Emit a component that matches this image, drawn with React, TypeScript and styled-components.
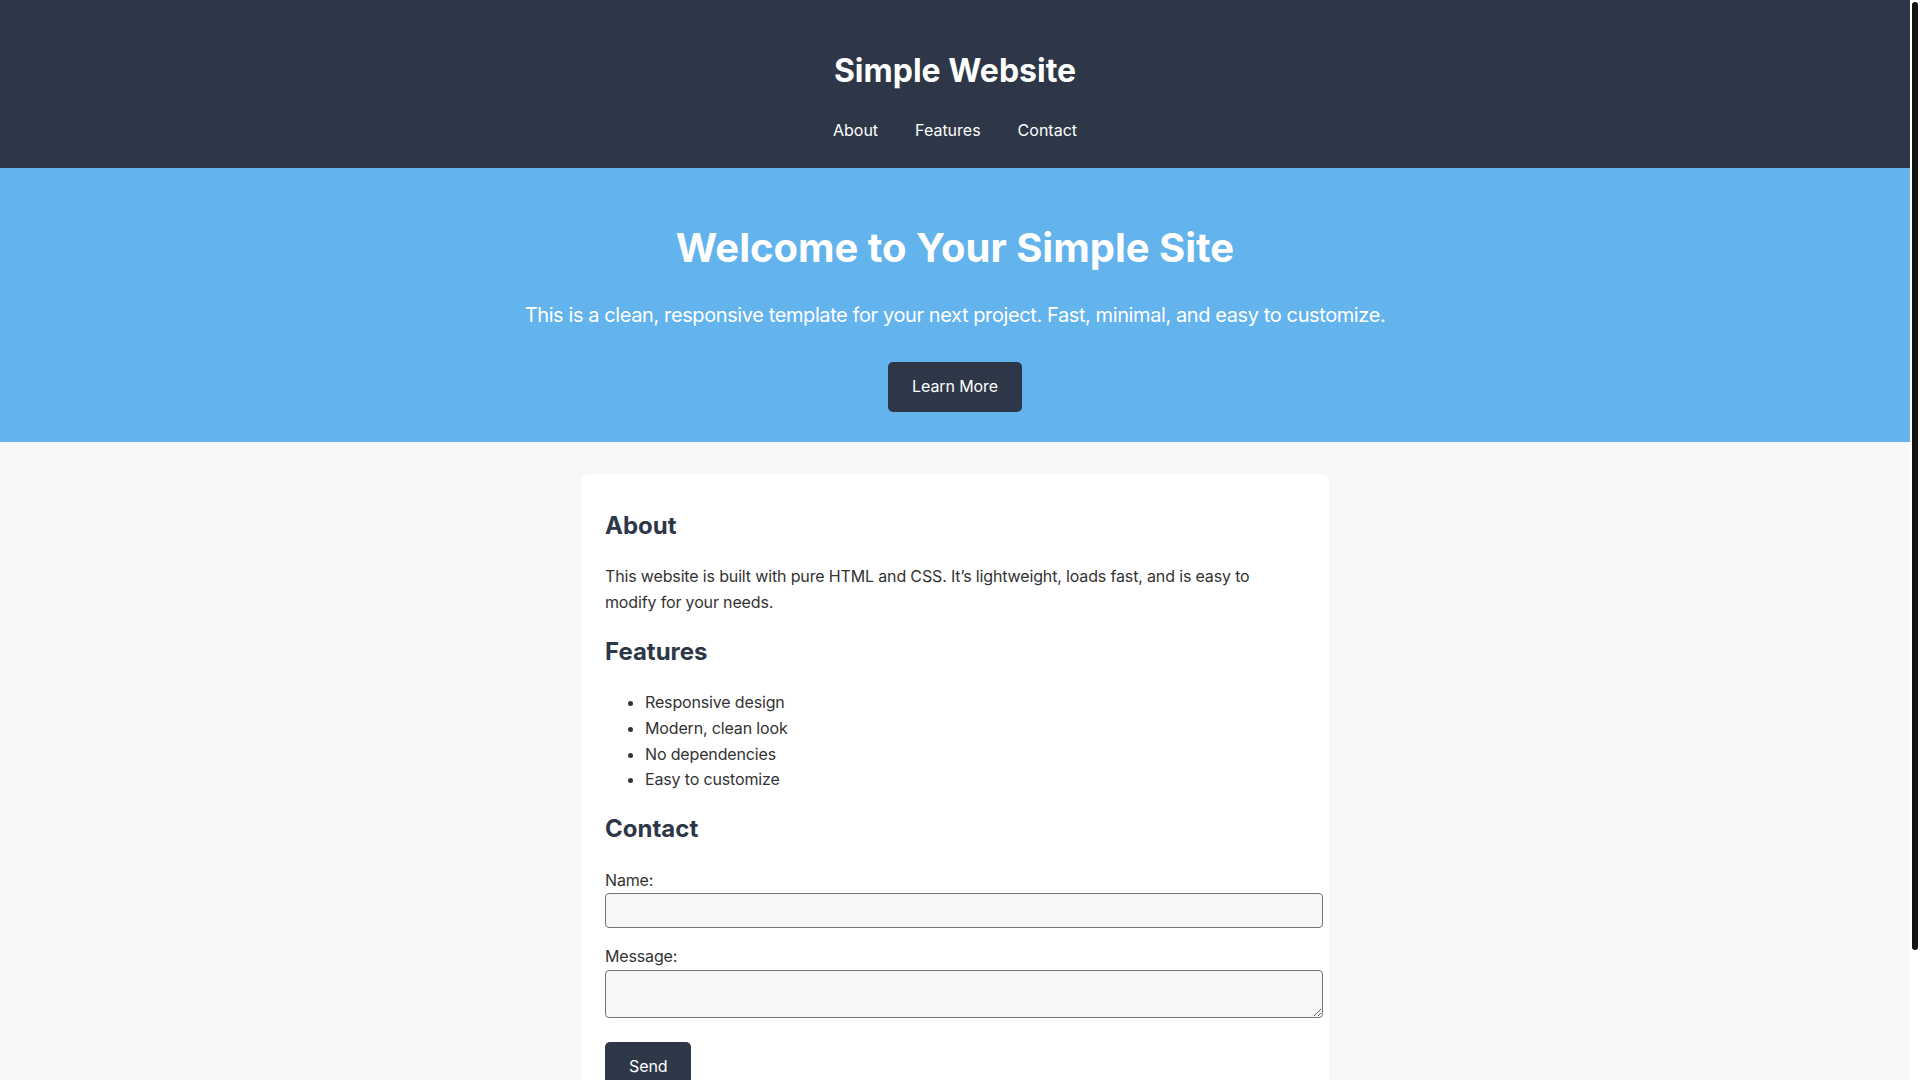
import React from "react";
import styled, { createGlobalStyle } from "styled-components";

const GlobalStyle = createGlobalStyle`
  html, body {
    margin: 0;
    padding: 0;
  }
  body {
    font-family: Inter, "Noto Sans", "Liberation Sans", sans-serif;
    line-height: 1.6;
    background: #f7f7f7;
    color: #333;
    margin-right: 10px;
  }
  * {
    font-family: inherit;
  }
`;

const ScrollTrack = styled.div`
  position: fixed;
  top: 0;
  right: 0;
  width: 10px;
  height: 100vh;
  background: #ffffff;
  z-index: 10;
`;

const ScrollThumb = styled.div`
  position: absolute;
  top: 2px;
  left: 2px;
  width: 6px;
  height: 948px;
  border-radius: 3px;
  background: #141414;
`;

const Header = styled.header`
  background: #2d3748;
  color: #fff;
  text-align: center;
  padding: 51px 16px 26px;
`;

const SiteTitle = styled.h1`
  margin: 0;
  font-size: 32px;
  line-height: 40px;
  font-weight: 700;
`;

const Nav = styled.nav`
  display: flex;
  justify-content: center;
  gap: 37px;
  margin-top: 27px;
  line-height: 24px;
`;

const NavLink = styled.a`
  color: #fff;
  text-decoration: none;
  font-size: 16px;
`;

const Hero = styled.section`
  background: #63b3ed;
  color: #fff;
  text-align: center;
  padding: 48px 16px 30px;
`;

const HeroTitle = styled.h2`
  margin: 0;
  font-size: 40px;
  line-height: 64px;
  font-weight: 700;
`;

const HeroText = styled.p`
  margin: 19px 0 31px;
  font-size: 20px;
  line-height: 32px;
  letter-spacing: -0.4px;
`;

const Button = styled.button`
  display: inline-block;
  background: #2d3748;
  color: #fff;
  border: none;
  border-radius: 5px;
  padding: 12px 24px;
  font-size: 16px;
  line-height: 1.6;
  letter-spacing: -0.1px;
  cursor: pointer;
`;

const Card = styled.main`
  max-width: 700px;
  margin: 32px auto;
  padding: 24px;
  background: #fff;
  border-radius: 8px;
`;

const SectionTitle = styled.h2<{ $first?: boolean }>`
  margin: ${(p) => (p.$first ? "14px" : "22px")} 0 24px;
  font-size: 24px;
  line-height: 1.2;
  font-weight: 700;
  color: #2d3748;
`;

const Paragraph = styled.p`
  margin: 17px 0 16px;
  font-size: 16px;
  letter-spacing: -0.15px;
`;

const List = styled.ul`
  margin: 16px 0;
  padding-left: 40px;
  letter-spacing: -0.15px;
`;

const Form = styled.form`
  display: block;
`;

const Label = styled.label`
  display: block;
  font-size: 16px;
  letter-spacing: -0.15px;
`;

const Field = styled.input`
  display: block;
  box-sizing: content-box;
  width: 100%;
  height: 17px;
  padding: 8px;
  margin: 0 0 16px;
  border: 1px solid #767676;
  border-radius: 4px;
  background: #f7f7f7;
  font-size: 14px;
  color: #333;
`;

const Area = styled.textarea`
  display: block;
  box-sizing: content-box;
  width: 100%;
  height: 30px;
  padding: 8px;
  margin: 0 0 24px;
  border: 1px solid #767676;
  border-radius: 4px;
  background: #f7f7f7;
  font-size: 14px;
  color: #333;
  resize: vertical;
`;

const Footer = styled.footer`
  background: #2d3748;
  color: #fff;
  text-align: center;
  padding: 27px 16px;
  font-size: 16px;
`;

export default function App() {
  return (
    <>
      <GlobalStyle />
      <ScrollTrack aria-hidden="true">
        <ScrollThumb />
      </ScrollTrack>
      <Header>
        <SiteTitle>Simple Website</SiteTitle>
        <Nav>
          <NavLink href="#about">About</NavLink>
          <NavLink href="#features">Features</NavLink>
          <NavLink href="#contact">Contact</NavLink>
        </Nav>
      </Header>
      <Hero>
        <HeroTitle>Welcome to Your Simple Site</HeroTitle>
        <HeroText>
          This is a clean, responsive template for your next project. Fast,
          minimal, and easy to customize.
        </HeroText>
        <Button type="button">Learn More</Button>
      </Hero>
      <Card>
        <section id="about">
          <SectionTitle $first>About</SectionTitle>
          <Paragraph>
            This website is built with pure HTML and CSS. It’s lightweight,
            loads fast, and is easy to modify for your needs.
          </Paragraph>
        </section>
        <section id="features">
          <SectionTitle>Features</SectionTitle>
          <List>
            <li>Responsive design</li>
            <li>Modern, clean look</li>
            <li>No dependencies</li>
            <li>Easy to customize</li>
          </List>
        </section>
        <section id="contact">
          <SectionTitle>Contact</SectionTitle>
          <Form onSubmit={(e) => e.preventDefault()}>
            <Label htmlFor="name">Name:</Label>
            <Field id="name" type="text" />
            <Label htmlFor="message">Message:</Label>
            <Area id="message" rows={2} />
            <Button type="submit">Send</Button>
          </Form>
        </section>
      </Card>
      <Footer>© 2025 Simple Website. All rights reserved.</Footer>
    </>
  );
}
